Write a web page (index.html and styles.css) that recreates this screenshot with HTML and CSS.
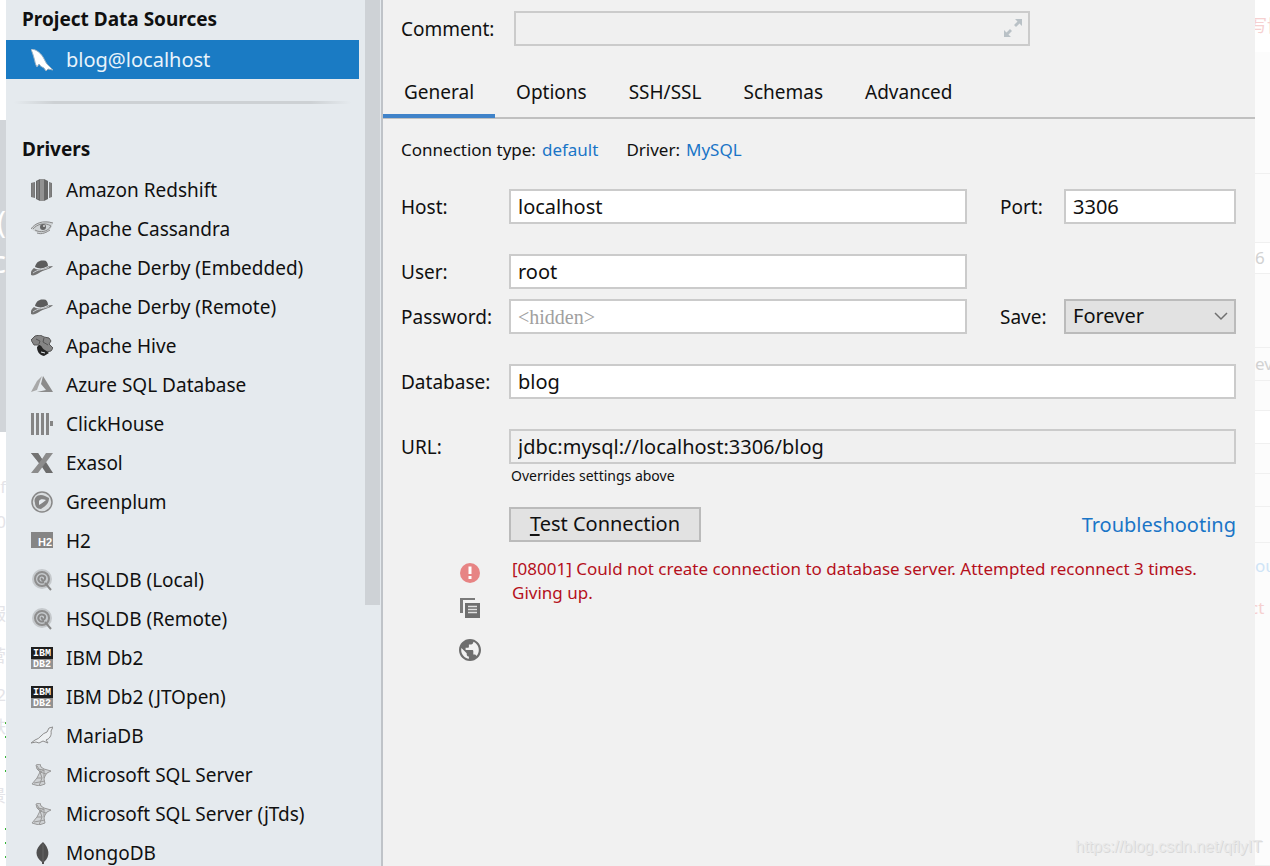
FILE: index.html
```
<!DOCTYPE html>
<html lang="en">
<head>
    <meta charset="UTF-8">
    <meta name="viewport" content="width=device-width, initial-scale=1.0">
    <title>Data Sources and Drivers</title>
    <link rel="stylesheet" href="styles.css">
</head>
<body>
    <!-- Shared icons -->
    <svg class="defs" aria-hidden="true">
        <symbol id="derby" viewBox="0 0 22 22">
            <path d="M4 10C5 5 9 3 12 3.500C15 3 17 5 17 9C12 12 8 12 4 10Z" fill="#5c5c5c"/>
            <path d="M3 11C8 14 14 12 17 9.500L22 9C20 12 12 13 8 16C5 18 2 19 0 18C-1 16 1 12 3 11Z" fill="#737373"/>
            <path d="M2 16C7 12 12 13 18 10.500" stroke="#c9cccf" stroke-width="1" fill="none"/>
        </symbol>
        <symbol id="hsql" viewBox="0 0 22 22">
            <circle cx="11" cy="10" r="10" fill="#c5c9cc"/>
            <circle cx="11" cy="10" r="7" fill="none" stroke="#8e8e8e" stroke-width="2"/>
            <path d="M13 13C9 15 6 11 8 8C10 5 15 7 14 10C13 13 10 11 11 9M14 14L20 21" stroke="#888" stroke-width="2" fill="none"/>
        </symbol>
        <symbol id="mssql" viewBox="0 0 22 22">
            <path d="M5 1L9 0L10 3L13 5L20 7L16 9L14 12L13 15L14 20L8 22L1 20L6 14L9 8L6 5Z" fill="#cfd2d4" stroke="#999"/>
            <path d="M6 5L13 6L9 8L15 10M9 8L11 14L6 14M11 14L8 22M3 19L14 17M6 2L10 8M13 6V14" fill="none" stroke="#999"/>
        </symbol>
    </svg>

    <div class="backdrop backdrop-left" aria-hidden="true">
        <span></span>
        <span class="shade"></span>
        <span class="shade big">(</span>
        <span class="shade big">c</span>
        <span class="shade"></span>
        <span></span>
        <span>f</span>
        <span>0</span>
        <span></span>
        <span>服</span>
        <span>营</span>
        <span>2</span>
        <span class="marks">铁</span>
        <span class="marks"></span>
        <span>景</span>
        <span class="marks"></span>
    </div>

    <div class="dialog">
        <aside class="sidebar">
            <div class="source-list">
                <h2>Project Data Sources</h2>
                <ul>
                    <li class="selected">
                        <svg viewBox="0 0 22 22"><path d="M0 0C4 0 9 3 12 8C14 11 15 15 18 17L22 21L17 20L15 22L13 19C11 18 9 17 8 15L6 18C4 15 4 12 3 9C2 5 1 3 0 0Z" fill="#fff" stroke="#9bb2c4"/></svg>
                        blog@localhost
                    </li>
                </ul>
                <hr>
                <h2>Drivers</h2>
                <ul>
                    <li>
                        <svg viewBox="0 0 22 22"><path d="M0 4L4 3V19L0 18ZM18 3L21 4V18L18 19Z" fill="#777"/><path d="M5 2L9 0V22L5 20ZM13 0L17 2V20L13 22Z" fill="#666"/><path d="M9 0H13V22H9Z" fill="#929292"/><path d="M2 4V18M7 2V20M19 4V18" stroke="#8c8c8c"/></svg>
                        Amazon Redshift
                    </li>
                    <li>
                        <svg viewBox="0 0 22 22"><path d="M0 11C3 7 7 4 12 5C16 3 19 4 22 5L20 10C17 15 11 17 5 14Z" fill="#cfd3d5"/><path d="M0 11C4 5 12 2 22 5M2 11C6 6 14 4 20 8C17 14 9 15 4 12M6 15C11 17 16 14 19 12" fill="none" stroke="#8a8a8a"/><circle cx="12" cy="9" r="3" fill="#666"/><circle cx="13" cy="8" r="1" fill="#ddd"/></svg>
                        Apache Cassandra
                    </li>
                    <li><svg><use href="#derby"/></svg>Apache Derby (Embedded)</li>
                    <li><svg><use href="#derby"/></svg>Apache Derby (Remote)</li>
                    <li>
                        <svg viewBox="0 0 22 22"><path d="M0 5L4 1L9 0L13 2L18 3L20 6L18 9L22 13L20 16L15 17L10 15L8 10L3 10Z" fill="#858585" stroke="#555"/><path d="M8 10C11 10 11 14 14 15L18 18L13 21C8 20 6 16 6 12Z" fill="#242424"/><path d="M10 17L14 18" stroke="#e5eaee"/><path d="M5 4L9 6L8 9M13 3L12 7L17 10" fill="none" stroke="#555"/></svg>
                        Apache Hive
                    </li>
                    <li>
                        <svg viewBox="0 0 22 22"><path d="M11 2L6 16L0 18L6 7Z" fill="#a8a8a8"/><path d="M12 2L22 18H6L15 16L10 10Z" fill="#8b8b8b"/></svg>
                        Azure SQL Database
                    </li>
                    <li>
                        <svg viewBox="0 0 22 22"><path d="M0 0H3V22H0ZM5 0H8V22H5ZM10 0H13V22H10ZM15 0H18V22H15ZM19 8H22V13H19Z" fill="#858585"/></svg>
                        ClickHouse
                    </li>
                    <li>
                        <svg viewBox="0 0 22 22"><path d="M0 1H7L11 7L15 1H22L7 21H0L8 11Z" fill="#8c8c8c"/><path d="M15 10L22 21H15L11 15Z" fill="#6c6c6c"/><path d="M0 1H7L11 7L8 11Z" fill="#737373"/></svg>
                        Exasol
                    </li>
                    <li>
                        <svg viewBox="0 0 22 22"><circle cx="11" cy="11" r="10" fill="#d9dddf" stroke="#888" stroke-width="1.500"/><path d="M4 12C2 6 8 2 14 5L18 7C18 12 15 15 10 18C6 18 4 15 4 12Z" fill="#848484"/><path d="M8 14V10C9 8 12 8 15 9C13 11 11 12 8 14Z" fill="#e5eaee"/></svg>
                        Greenplum
                    </li>
                    <li>
                        <svg viewBox="0 0 22 22"><rect y="2" width="22" height="16" fill="#858585"/><text x="14" y="16" text-anchor="middle" class="icon-text icon-text-large">H2</text></svg>
                        H2
                    </li>
                    <li><svg><use href="#hsql"/></svg>HSQLDB (Local)</li>
                    <li><svg><use href="#hsql"/></svg>HSQLDB (Remote)</li>
                    <li>
                        <svg viewBox="0 0 22 22"><rect width="22" height="12" fill="#1e1e1e"/><rect y="12" width="22" height="10" fill="#919191"/><text x="11" y="9" text-anchor="middle" class="icon-text">IBM</text><text x="11" y="20" text-anchor="middle" class="icon-text">DB2</text></svg>
                        IBM Db2
                    </li>
                    <li>
                        <svg viewBox="0 0 22 22"><rect width="22" height="12" fill="#1e1e1e"/><rect y="12" width="22" height="10" fill="#919191"/><text x="11" y="9" text-anchor="middle" class="icon-text">IBM</text><text x="11" y="20" text-anchor="middle" class="icon-text">DB2</text></svg>
                        IBM Db2 (JTOpen)
                    </li>
                    <li>
                        <svg viewBox="0 0 22 22"><path d="M0 18L4 15C9 14 11 8 16 7L18 3L22 2L20 6C21 11 18 14 15 15L17 18L12 16L8 18L5 17Z" fill="#eef1f3" stroke="#8c8c8c"/></svg>
                        MariaDB
                    </li>
                    <li><svg><use href="#mssql"/></svg>Microsoft SQL Server</li>
                    <li><svg><use href="#mssql"/></svg>Microsoft SQL Server (jTds)</li>
                    <li>
                        <svg viewBox="0 0 22 22"><path d="M12 0C3 7 4 15 11 20V22H13V20C20 14 18 6 12 0Z" fill="#4f4f4f"/><path d="M12 2V20" stroke="#666"/></svg>
                        MongoDB
                    </li>
                </ul>
            </div>
            <div class="scrollbar"></div>
        </aside>

        <main class="settings">
            <div class="comment-row">
                <label for="comment">Comment:</label>
                <div class="comment-box">
                    <input type="text" id="comment">
                    <button type="button" class="expand" aria-label="Expand">
                        <svg viewBox="0 0 18 18"><path d="M11 0H18V7L15.500 4.500L12 8L10 6L13.500 2.500ZM0 18V11L2.500 13.500L6 10L8 12L4.500 15.500L7 18Z" fill="#b9c1c6"/></svg>
                    </button>
                </div>
            </div>

            <nav class="tabs">
                <a href="#general" class="active">General</a>
                <a href="#options">Options</a>
                <a href="#ssh">SSH/SSL</a>
                <a href="#schemas">Schemas</a>
                <a href="#advanced">Advanced</a>
            </nav>

            <div class="connection">
                <span>Connection type:</span>
                <a href="#type">default</a>
                <span class="driver">Driver:</span>
                <a href="#driver">MySQL</a>
            </div>

            <form>
                <div class="row">
                    <label for="host">Host:</label>
                    <input type="text" id="host" value="localhost">
                    <label for="port" class="side">Port:</label>
                    <input type="text" id="port" value="3306">
                </div>
                <div class="row">
                    <label for="user">User:</label>
                    <input type="text" id="user" value="root">
                </div>
                <div class="row row-close">
                    <label for="password">Password:</label>
                    <input type="password" id="password" placeholder="&lt;hidden&gt;">
                    <label for="save" class="side">Save:</label>
                    <div class="select-box">
                        <select id="save"><option>Forever</option></select>
                        <svg viewBox="0 0 14 9"><path d="M1 1L7 7L13 1" fill="none" stroke="#707070" stroke-width="1.500"/></svg>
                    </div>
                </div>
                <div class="row">
                    <label for="database">Database:</label>
                    <input type="text" id="database" class="wide" value="blog">
                </div>
                <div class="row">
                    <label for="url">URL:</label>
                    <input type="text" id="url" class="wide muted" value="jdbc:mysql://localhost:3306/blog">
                </div>
                <p class="hint">Overrides settings above</p>
                <div class="test-row">
                    <button type="button" class="test"><u>T</u>est Connection</button>
                    <a href="#troubleshooting">Troubleshooting</a>
                </div>
            </form>

            <div class="result">
                <div class="result-icons">
                    <svg viewBox="0 0 22 22"><circle cx="11" cy="11" r="10" fill="#e78484"/><path d="M9.500 4.500H12.500V12H9.500ZM9.500 14H12.500V17H9.500Z" fill="#fff"/></svg>
                    <div class="result-actions">
                        <button type="button" aria-label="Copy">
                            <svg viewBox="0 0 22 22"><path d="M1 1H16V3H4V16H1Z" fill="#7a7a7a"/><path d="M6 6H21V21H6Z" fill="#6e6e6e"/><path d="M9 9.500H18M9 12.500H18M9 15.500H18" stroke="#e0e0e0" stroke-width="1.500"/></svg>
                        </button>
                        <button type="button" aria-label="Search online">
                            <svg viewBox="2 2 20 20"><path d="M12 2C6.480 2 2 6.480 2 12s4.480 10 10 10 10-4.480 10-10S17.520 2 12 2zm-1 17.930c-3.950-.490-7-3.850-7-7.930 0-.620.080-1.210.210-1.790L9 15v1c0 1.100.900 2 2 2v1.930zm6.900-2.540c-.260-.810-1-1.390-1.900-1.390h-1v-3c0-.550-.450-1-1-1H8v-2h2c.550 0 1-.450 1-1V7h2c1.100 0 2-.900 2-2v-.410c2.930 1.190 5 4.060 5 7.410 0 2.080-.800 3.970-2.100 5.390z" fill="#6e6e6e"/></svg>
                        </button>
                    </div>
                </div>
                <p class="error">[08001] Could not create connection to database server. Attempted reconnect 3 times. Giving up.</p>
            </div>
        </main>
    </div>

    <div class="backdrop backdrop-right" aria-hidden="true">
        <span class="light red">写博</span>
        <span></span>
        <span></span>
        <span class="light">6</span>
        <span></span>
        <span>ev</span>
        <span></span>
        <span class="light"></span>
        <span></span>
        <span></span>
        <span></span>
        <span class="blue">ou</span>
        <span class="red">ct</span>
        <span></span>
    </div>
    <div class="watermark">https://blog.csdn.net/qflyIT</div>
</body>
</html>
```
FILE: styles.css
```
* {
    box-sizing: border-box;
    margin: 0;
    padding: 0;
}
body {
    position: relative;
    display: flex;
    height: 100vh;
    overflow: hidden;
    background: #fff;
    color: #101010;
    font-family: "Noto Sans", "Noto Sans CJK SC", sans-serif;
    font-size: 19px;
    line-height: 24px;
}
a {
    color: #1a75c7;
    text-decoration: none;
}
.defs {
    position: absolute;
    width: 0;
    height: 0;
}
.icon-text {
    fill: #fff;
    font: bold 10px "Liberation Mono", monospace;
}
.icon-text-large {
    font: bold 11px "Liberation Sans", sans-serif;
}

/* Page behind the dialog */
.backdrop {
    display: grid;
    flex: none;
    overflow: hidden;
    color: #e4e4e8;
    font-size: 17px;
}
.backdrop span {
    display: flex;
    align-items: center;
    overflow: hidden;
    white-space: nowrap;
}
.backdrop-left {
    width: 6px;
    grid-template-rows: 120px 80px 44px 36px 152px 40px 30px 40px 54px 36px 48px 30px 34px 32px 40px 1fr;
}
.backdrop-left span {
    justify-content: flex-end;
}
.backdrop-left .shade {
    background: #d1d5d9;
    color: #fff;
}
.backdrop-left .big {
    font-size: 30px;
}
.backdrop-left .marks {
    background: repeating-linear-gradient(transparent 0 12px, #35b535 12px 14px) right / 1px 100% no-repeat;
}
.backdrop-right {
    width: 15px;
    grid-template-rows: 52px 122px 69px 31px 74px 33px 30px 33px 30px 33px 36px 46px 38px 1fr;
}
.backdrop-right span {
    background: #fcfcfc;
    color: #d2d2d2;
    border-bottom: 1px solid #f0f0f0;
}
.backdrop-right .light {
    background: #fff;
}
.backdrop-right .red {
    color: #f6d0d0;
    border-bottom: none;
    text-indent: -5px;
}
.backdrop-right .blue {
    color: #cfe4f7;
    border-bottom: none;
}

/* Dialog */
.dialog {
    display: flex;
    flex: 1;
    min-width: 0;
    background: #f1f1f1;
}
.sidebar {
    display: flex;
    flex: none;
    width: 377px;
    overflow: hidden;
    background: #e5eaee;
    border-right: 2px solid #bfc3c8;
}
.source-list {
    flex: 1;
}
.source-list h2 {
    height: 40px;
    padding-left: 16px;
    font-size: 19px;
    line-height: 39px;
}
.source-list ul {
    list-style: none;
}
.source-list li {
    display: flex;
    align-items: center;
    gap: 13px;
    height: 39px;
    padding-left: 25px;
    white-space: nowrap;
}
.source-list li svg {
    width: 22px;
    height: 22px;
}
.source-list .selected {
    background: #1a7bc4;
    color: #e8f3fb;
    font-size: 20px;
}
.source-list hr {
    height: 3px;
    margin: 22px 8px 26px;
    border: none;
    background: linear-gradient(to right, transparent, #cdd1d4 12%, #cdd1d4 88%, transparent);
}
.scrollbar {
    width: 15px;
    height: 605px;
    margin: 0 1px 0 6px;
    background: #ced2d6;
}

/* Settings */
.settings {
    flex: 1;
    min-width: 0;
}
.settings input,
.settings select,
.test {
    width: 100%;
    height: 35px;
    padding: 0 7px 1px;
    border: 2px solid #cbcbcb;
    border-radius: 0;
    background: #fff;
    color: #101010;
    font: inherit;
    font-size: 20px;
}
.comment-row {
    display: grid;
    grid-template-columns: 113px 516px;
    align-items: center;
    padding: 11px 18px 0;
}
.comment-box {
    position: relative;
}
.settings .comment-box input,
.settings .muted {
    background: #f0f0f0;
}
.comment-box input {
    display: block;
}
.expand {
    position: absolute;
    top: 8px;
    right: 8px;
    width: 18px;
    height: 18px;
    border: none;
    background: none;
}
.expand svg {
    display: block;
}
.tabs {
    display: flex;
    height: 73px;
    align-items: flex-end;
    border-bottom: 2px solid #c0c0c0;
}
.tabs a {
    height: 43px;
    margin-bottom: -1px;
    padding: 5px 21px 0;
    border-bottom: 4px solid transparent;
    color: #101010;
}
.tabs .active {
    border-color: #4083c9;
}
.connection {
    display: flex;
    gap: 6px;
    padding: 19px 18px 0;
    font-size: 17px;
}
.driver {
    margin-left: 22px;
}
form {
    padding: 27px 19px 0 18px;
}
.row {
    display: grid;
    grid-template-columns: 108px 1fr 97px 172px;
    align-items: center;
    margin-bottom: 30px;
}
.row-close {
    margin-top: -20px;
}
.side {
    padding-left: 33px;
}
.wide {
    grid-column: 2 / 5;
}
.settings #password::placeholder {
    color: #a0a0a0;
    font-family: "Liberation Serif", serif;
}
.select-box {
    position: relative;
}
.settings select {
    display: block;
    appearance: none;
    background: #e2e2e2;
    border-color: #bbb;
}
.select-box svg {
    position: absolute;
    top: 13px;
    right: 8px;
    width: 14px;
    height: 9px;
    pointer-events: none;
}
.hint {
    margin: -30px 0 0 110px;
    font-size: 14px;
}
.test-row {
    display: flex;
    align-items: center;
    justify-content: space-between;
    margin: 19px 0 0 108px;
    font-size: 20px;
}
.settings .test {
    width: 192px;
    background: #e2e2e2;
    border-color: #bbb;
}
.test u {
    text-underline-offset: 3px;
}
.result {
    display: flex;
    gap: 31px;
    padding: 15px 50px 0 76px;
}
.result-icons {
    display: flex;
    flex: none;
    flex-direction: column;
    gap: 13px;
    padding-top: 5px;
}
.result-actions {
    display: grid;
    gap: 20px;
}
.result-icons button {
    height: 22px;
    border: none;
    background: none;
}
.result-icons svg {
    display: block;
    width: 22px;
    height: 22px;
}
.error {
    color: #b5101c;
    font-size: 17px;
}
.watermark {
    position: absolute;
    right: 8px;
    bottom: 7px;
    color: #e9e9e9;
    font-family: "Liberation Sans", sans-serif;
    font-size: 16px;
    text-shadow: 1px 1px 0 #d8d8d8;
}
```
